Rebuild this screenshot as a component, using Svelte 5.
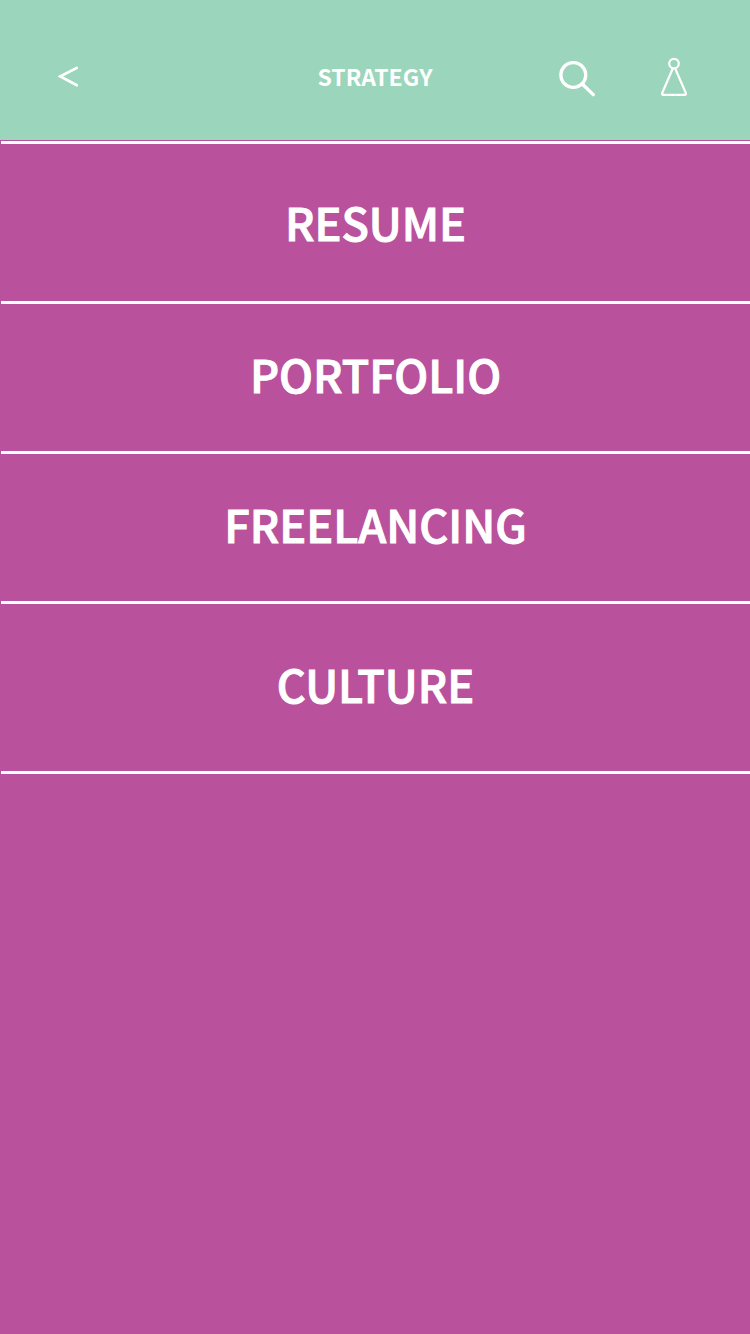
<script>
  const topics = [
    { label: 'RESUME', size: 'tall' },
    { label: 'PORTFOLIO', size: 'regular' },
    { label: 'FREELANCING', size: 'regular' },
    { label: 'CULTURE', size: 'roomy' }
  ];
</script>

<div class="page">
  <header>
    <button class="back" aria-label="Back">
      <svg viewBox="0 0 20 22" width="20" height="22" aria-hidden="true"><path d="M19.8 1.4 2.4 10.4 19.8 19.8" /></svg>
    </button>
    <h1>STRATEGY</h1>
    <div class="actions">
      <button class="search" aria-label="Search">
        <svg viewBox="0 0 38 40" width="38" height="40" aria-hidden="true">
          <circle cx="15.3" cy="18" r="12.4" /><path d="M24.3 27 35.3 37.6" />
        </svg>
      </button>
      <button class="profile" aria-label="Profile">
        <svg viewBox="0 0 28 40" width="28" height="40" aria-hidden="true">
          <circle cx="14" cy="6.6" r="4.8" />
          <path d="M12.8 11.5 2.3 35.8Q1.4 37.9 3.6 37.9H24.4Q26.6 37.9 25.7 35.8L15.2 11.5" />
        </svg>
      </button>
    </div>
  </header>
  <nav aria-label="Strategy topics">
    {#each topics as topic}
      <a class={topic.size} href="#{topic.label.toLowerCase()}">{topic.label}</a>
    {/each}
  </nav>
</div>

<style>
  :global(body) {
    background: #b9519d;
  }
  .page {
    min-height: 100vh;
    background: #b9519d;
    color: #fff;
    font-family: "Noto Sans CJK SC", "Noto Sans", sans-serif;
  }
  header {
    display: grid;
    grid-template-columns: 1fr auto 1fr;
    align-items: center;
    box-sizing: border-box;
    height: 140px;
    padding: 14px 58px 0;
    background: #9bd5bb;
  }
  h1 {
    margin: 0;
    padding-bottom: 2px;
    font-size: 23px;
    line-height: 36px;
    font-weight: 700;
  }
  button {
    display: flex;
    padding: 0;
    border: 0;
    background: none;
    color: inherit;
    cursor: pointer;
  }
  svg {
    fill: none;
    stroke: currentColor;
  }
  .back {
    justify-self: start;
  }
  .back svg {
    stroke-width: 2.7;
  }
  .actions {
    display: flex;
    align-items: center;
    justify-content: flex-end;
    gap: 64px;
    padding-right: 4px;
  }
  .search svg {
    stroke-width: 3.4;
    stroke-linecap: round;
  }
  .profile svg {
    stroke-width: 2.2;
  }
  nav {
    display: flex;
    flex-direction: column;
    margin: 1px 0 0 1px;
    border-top: 3px solid #fff;
  }
  nav a {
    display: flex;
    align-items: center;
    justify-content: center;
    box-sizing: border-box;
    padding-bottom: 8px;
    border-bottom: 3px solid #fff;
    color: inherit;
    font-size: 45px;
    line-height: 68px;
    font-weight: 500;
    text-decoration: none;
    -webkit-text-stroke: 1px currentColor;
  }
  nav .tall {
    height: 160px;
    padding-bottom: 2px;
  }
  .regular {
    height: 150px;
  }
  .roomy {
    height: 170px;
  }
</style>
